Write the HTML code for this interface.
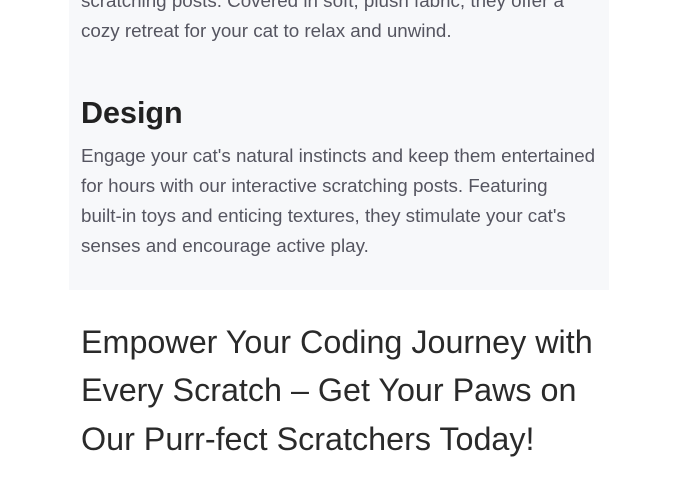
<!DOCTYPE html>
<html><head><style>
html,body{margin:0;padding:0;background:#fff;width:677px;height:500px;overflow:hidden;font-family:"Liberation Sans",sans-serif;}
.box{position:absolute;left:69px;top:-20px;width:540px;height:310px;background:#f7f8fa;}
.l{position:absolute;left:81px;white-space:nowrap;color:#555560;font-size:18.8px;line-height:30px;}
.h{position:absolute;left:81px;font-size:30.5px;font-weight:bold;color:#222;line-height:40px;}
.b{position:absolute;left:81px;white-space:nowrap;color:#2a2a2a;font-size:32.3px;line-height:48px;}
</style></head><body>
<div class="box"></div>
<div class="l" style="top:-14px">scratching posts. Covered in soft, plush fabric, they offer a</div>
<div class="l" style="top:16px">cozy retreat for your cat to relax and unwind.</div>
<div class="h" style="top:93px">Design</div>
<div class="l" style="top:141px">Engage your cat's natural instincts and keep them entertained</div>
<div class="l" style="top:171px">for hours with our interactive scratching posts. Featuring</div>
<div class="l" style="top:201px">built-in toys and enticing textures, they stimulate your cat's</div>
<div class="l" style="top:231px">senses and encourage active play.</div>
<div class="b" style="top:318px">Empower Your Coding Journey with</div>
<div class="b" style="top:366px">Every Scratch – Get Your Paws on</div>
<div class="b" style="top:415px">Our Purr-fect Scratchers Today!</div>
</body></html>
